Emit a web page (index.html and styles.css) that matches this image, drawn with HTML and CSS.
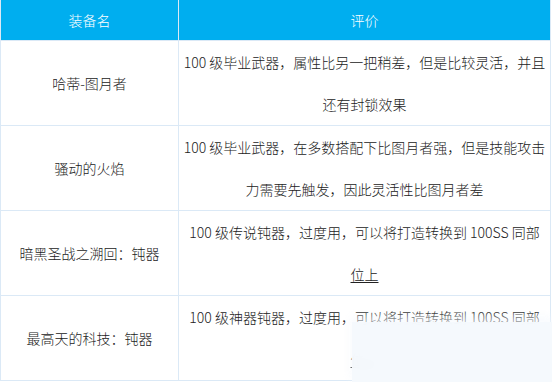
FILE: index.html
```html
<!DOCTYPE html>
<html lang="zh">
<head>
<meta charset="utf-8">
<link rel="stylesheet" href="styles.css">
</head>
<body>
<div class="wrap">
  <table class="equip">
    <thead>
      <tr><th class="c1">装备名</th><th class="c2">评价</th></tr>
    </thead>
    <tbody>
      <tr>
        <td>哈蒂-图月者</td>
        <td>100 级毕业武器，属性比另一把稍差，但是比较灵活，并且还有封锁效果</td>
      </tr>
      <tr>
        <td>骚动的火焰</td>
        <td>100 级毕业武器，在多数搭配下比图月者强，但是技能攻击力需要先触发，因此灵活性比图月者差</td>
      </tr>
      <tr>
        <td>暗黑圣战之溯回：钝器</td>
        <td>100 级传说钝器，过度用，可以将打造转换到 100SS 同部<span class="u">位上</span></td>
      </tr>
      <tr>
        <td>最高天的科技：钝器</td>
        <td>100 级神器钝器，过度用，可以将打造转换到 100SS 同部<span class="u">位上</span></td>
      </tr>
    </tbody>
  </table>
  <div class="blur"></div>
</div>
</body>
</html>
```

FILE: styles.css
```css
html, body {
  margin: 0;
  padding: 0;
  background: #fff;
}
.wrap {
  position: relative;
  width: 552px;
  height: 382px;
  overflow: hidden;
}
.equip {
  border-collapse: collapse;
  width: 551px;
  table-layout: fixed;
  font-family: "Noto Sans CJK SC", "Microsoft YaHei", sans-serif;
  font-size: 14px;
  font-weight: 300;
  color: #222;
}
.equip th {
  background: #00aeef;
  color: #fff;
  font-weight: 300;
  height: 40px;
  padding: 0;
  line-height: 20px;
  border-left: 1px solid #dbe9f6;
  border-right: 1px solid #dbe9f6;
}
.equip th.c1 { width: 177px; }
.equip td {
  border: 1px solid #dbe9f6;
  text-align: center;
  padding: 0 4px;
  line-height: 42px;
  height: 84px;
}
.u {
  text-decoration: underline;
  text-underline-offset: 2px;
}
.blur {
  position: absolute;
  left: 352px;
  top: 322px;
  width: 200px;
  height: 60px;
  background: rgba(245, 249, 253, 0.97);
  backdrop-filter: blur(6px);
  box-shadow: 0 -4px 8px 2px rgba(245, 249, 253, 0.6);
}
```
